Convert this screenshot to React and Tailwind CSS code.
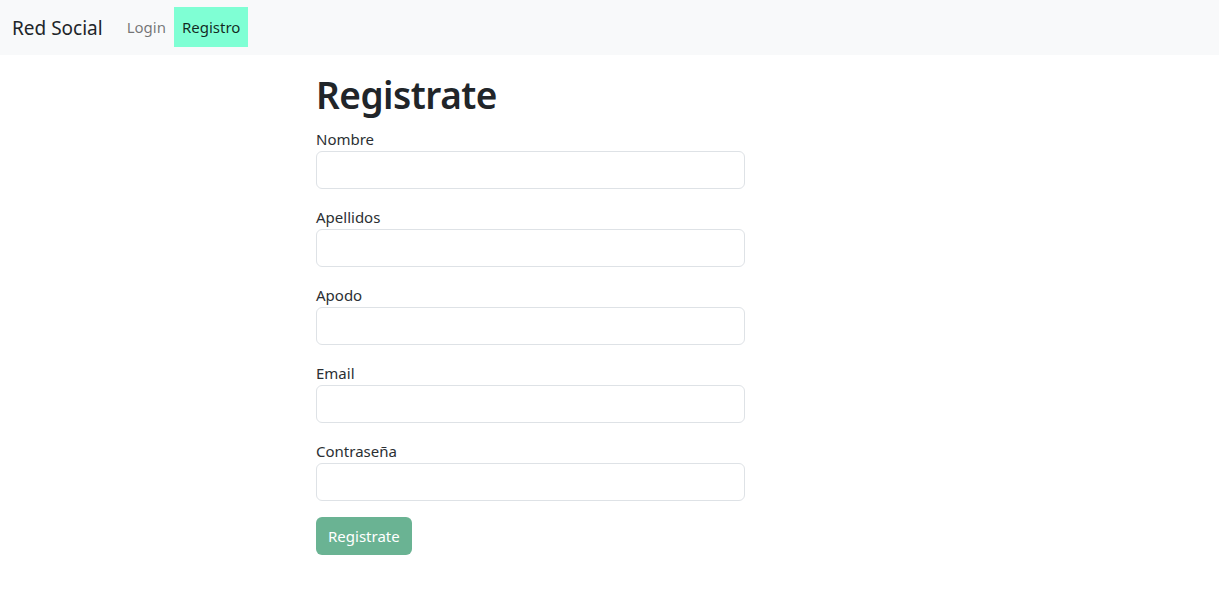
import React from "react";

const fields = [
  { label: "Nombre", type: "text" },
  { label: "Apellidos", type: "text" },
  { label: "Apodo", type: "text" },
  { label: "Email", type: "email" },
  { label: "Contraseña", type: "password" },
];

const Navbar = () => (
  <nav className="h-[55px] bg-[#f8f9fa] flex items-center px-3">
    <span className="text-[19px] leading-[30px] text-[#212529] mr-4">Red Social</span>
    <a className="px-2 h-10 mb-[2px] flex items-center text-[15px] text-[rgba(0,0,0,0.55)]">Login</a>
    <a className="px-2 h-10 mb-[2px] flex items-center bg-[#7fffd4] text-[rgba(0,0,0,0.85)] text-[15px]">Registro</a>
  </nav>
);

export default function App() {
  return (
    <div
      className="min-h-screen bg-white text-[#212529] text-base leading-6"
      style={{ fontFamily: '"Noto Sans", "Open Sans", sans-serif' }}
    >
      <Navbar />
      <main className="pl-[316px] pt-4">
        <h1 className="text-[37px] leading-[48px] font-semibold tracking-[-0.5px] mb-2">Registrate</h1>
        <form className="w-[429px]" onSubmit={(e) => e.preventDefault()}>
          {fields.map((f) => (
            <div key={f.label} className="mb-4">
              <label className="block text-[15px] leading-6 text-[#2b2f33]">{f.label}</label>
              <input
                type={f.type}
                className="block w-full h-[38px] px-3 border border-[#dee2e6] rounded-md bg-white outline-none"
              />
            </div>
          ))}
          <button
            type="submit"
            className="h-[38px] px-3 rounded-md bg-[#6ab393] text-white text-[15px]"
          >
            Registrate
          </button>
        </form>
      </main>
    </div>
  );
}
